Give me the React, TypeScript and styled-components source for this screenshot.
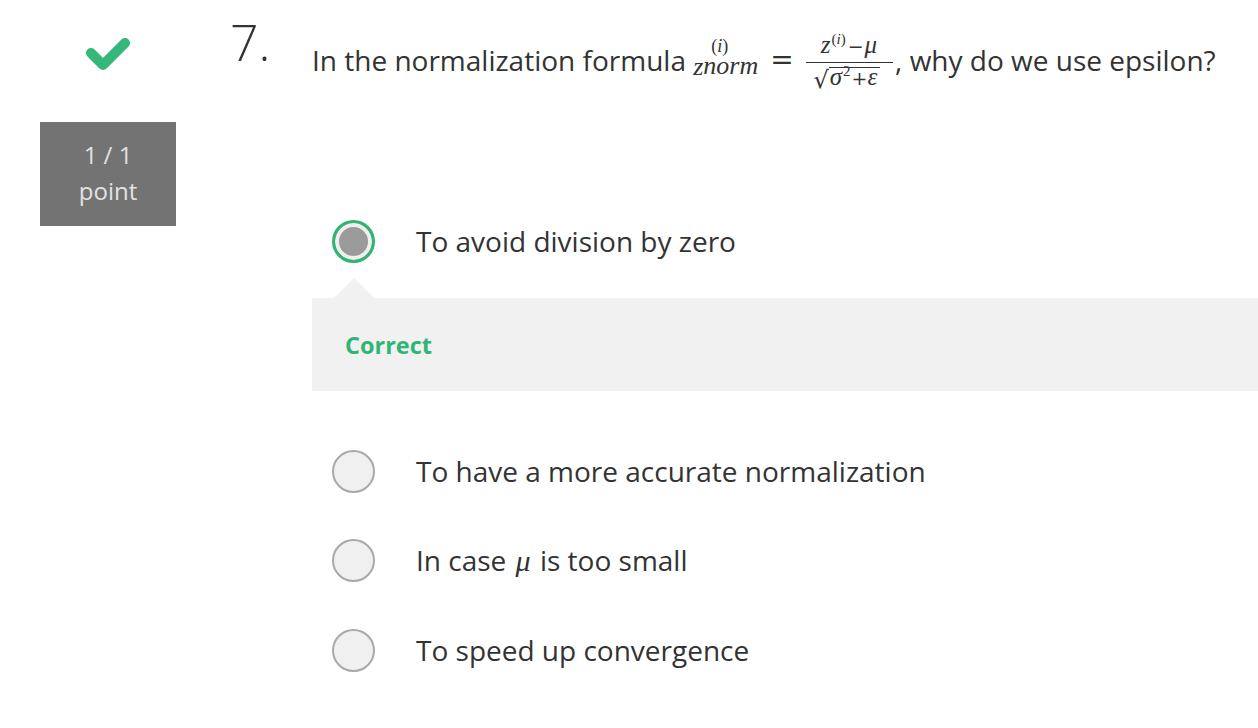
import React from "react";
import styled, { createGlobalStyle } from "styled-components";

const Global = createGlobalStyle`
  html, body { margin: 0; padding: 0; background: #fff; }
  body { font-family: "Open Sans", "Liberation Sans", sans-serif; color: #333; }
`;

const Page = styled.div`
  display: flex;
  align-items: flex-start;
  padding: 17px 0 0 40px;
  width: 1258px;
  box-sizing: border-box;
`;

const LeftCol = styled.div`
  width: 136px;
  display: flex;
  flex-direction: column;
  align-items: center;
  flex-shrink: 0;
`;

const CheckIcon = styled.svg`
  margin-top: 19px;
  width: 46px;
  height: 36px;
`;

const ScoreBox = styled.div`
  margin-top: 50px;
  width: 136px;
  height: 104px;
  background: #737373;
  color: #e2e2e2;
  font-size: 24px;
  line-height: 36px;
  text-align: center;
  padding-top: 15px;
  box-sizing: border-box;
`;

const NumberCol = styled.div`
  width: 82px;
  margin-left: 54px;
  flex-shrink: 0;
  font-size: 50px;
  font-weight: 300;
  line-height: 50px;
  color: #333;
`;

const Content = styled.div`
  flex: 1;
  min-width: 0;
  padding-top: 14px;
`;

const Question = styled.div`
  font-size: 28px;
  line-height: 40px;
  height: 40px;
  color: #333;
  white-space: nowrap;
`;

const Serif = styled.span`
  font-family: "Liberation Serif", "Times New Roman", serif;
  font-style: italic;
`;

const MathMain = styled(Serif)`
  font-size: 26px;
  vertical-align: -4px;
`;

const Stack = styled.span`
  display: inline-flex;
  flex-direction: column;
  align-items: flex-start;
  vertical-align: 19px;
  font-family: "Liberation Serif", "Times New Roman", serif;
  font-style: italic;
`;

const StackSup = styled.span`
  font-size: 18px;
  line-height: 20px;
  padding-left: 8px;
`;

const StackSub = styled.span`
  font-size: 26px;
  line-height: 20px;
`;

const Upright = styled.span`
  font-style: normal;
`;

const Equals = styled.span`
  font-family: "DejaVu Serif", "Liberation Serif", serif;
  font-size: 28px;
  margin: 0 12px 0 12px;
  vertical-align: 2px;
`;

const Frac = styled.span`
  display: inline-flex;
  flex-direction: column;
  align-items: center;
  vertical-align: 18px;
  font-family: "Liberation Serif", "Times New Roman", serif;
  font-style: italic;
  font-size: 25px;
  margin-right: 2px;
`;

const Numer = styled.span`
  padding: 0 16px 2px 15px;
  border-bottom: 1.5px solid #333;
  line-height: 28px;
`;

const Op = styled.span<{ $l?: number; $r?: number }>`
  font-family: "DejaVu Serif", "Liberation Serif", serif;
  font-style: normal;
  font-size: 19px;
  margin: 0 ${(p) => p.$r ?? 0}px 0 ${(p) => p.$l ?? 0}px;
`;

const Denom = styled.span`
  display: inline-flex;
  align-items: flex-start;
  margin-top: 4px;
  padding-right: 5px;
`;

const Radical = styled.span`
  font-family: "DejaVu Serif", "Liberation Serif", serif;
  font-style: normal;
  font-size: 24px;
  line-height: 28px;
  margin-top: -1px;
`;

const Radicand = styled.span`
  border-top: 1.5px solid #333;
  line-height: 18px;
  padding: 0 3px 0 1px;
`;

const SmallSup = styled.sup`
  font-size: 15px;
  vertical-align: 9px;
  line-height: 0;
  font-style: normal;
  margin-left: 1px;
`;

const OptionList = styled.div`
  display: flex;
  flex-direction: column;
  margin-top: 148px;
`;

const Option = styled.div<{ $gap?: number }>`
  display: flex;
  align-items: center;
  padding-left: 20px;
  height: 44px;
  margin-top: ${(p) => p.$gap ?? 0}px;
`;

const Radio = styled.span<{ $checked?: boolean }>`
  width: 43px;
  height: 43px;
  border-radius: 50%;
  box-sizing: border-box;
  flex-shrink: 0;
  background: ${(p) => (p.$checked ? "#9b9b9b" : "#f0f0f0")};
  border: ${(p) => (p.$checked ? "3.5px solid #2fb574" : "2px solid #a9a9a9")};
  box-shadow: ${(p) => (p.$checked ? "inset 0 0 0 4px #efefef" : "none")};
`;

const OptionText = styled.span`
  margin-left: 41px;
  font-size: 28px;
  color: #333;
  white-space: nowrap;
`;

const MathInline = styled(Serif)`
  font-size: 30px;
  padding: 0 2px;
`;

const Feedback = styled.div`
  position: relative;
  margin-top: 35px;
  background: #f1f1f1;
  height: 93px;
  display: flex;
  align-items: center;
  padding-left: 33px;
  &::before {
    content: "";
    position: absolute;
    left: 22px;
    top: -20px;
    border-left: 20px solid transparent;
    border-right: 20px solid transparent;
    border-bottom: 20px solid #f1f1f1;
  }
`;

const FeedbackText = styled.span`
  color: #2fb574;
  font-weight: 700;
  font-size: 23.5px;
`;

export default function App() {
  return (
    <>
      <Global />
      <Page>
        <LeftCol>
          <CheckIcon viewBox="0 0 46 36">
            <polyline
              points="6,17 18,29 40,7"
              fill="none"
              stroke="#35b779"
              strokeWidth="10"
              strokeLinecap="round"
              strokeLinejoin="round"
            />
          </CheckIcon>
          <ScoreBox>
            1 / 1
            <br />
            point
          </ScoreBox>
        </LeftCol>
        <NumberCol>7.</NumberCol>
        <Content>
          <Question>
            In the normalization formula <MathMain>z</MathMain>
            <Stack>
              <StackSup>
                <Upright>(</Upright>i<Upright>)</Upright>
              </StackSup>
              <StackSub>norm</StackSub>
            </Stack>
            <Equals>=</Equals>
            <Frac>
              <Numer>
                z
                <SmallSup>
                  (<i>i</i>)
                </SmallSup>
                <Op $l={2} $r={1}>−</Op>μ
              </Numer>
              <Denom>
                <Radical>√</Radical>
                <Radicand>
                  σ<SmallSup>2</SmallSup>
                  <Op $l={1}>+</Op>ε
                </Radicand>
              </Denom>
            </Frac>
            , why do we use epsilon?
          </Question>
          <OptionList>
            <Option>
              <Radio $checked />
              <OptionText>To avoid division by zero</OptionText>
            </Option>
            <Feedback>
              <FeedbackText>Correct</FeedbackText>
            </Feedback>
            <Option $gap={58}>
              <Radio />
              <OptionText>To have a more accurate normalization</OptionText>
            </Option>
            <Option $gap={45}>
              <Radio />
              <OptionText>
                In case <MathInline>μ</MathInline> is too small
              </OptionText>
            </Option>
            <Option $gap={46}>
              <Radio />
              <OptionText>To speed up convergence</OptionText>
            </Option>
          </OptionList>
        </Content>
      </Page>
    </>
  );
}
